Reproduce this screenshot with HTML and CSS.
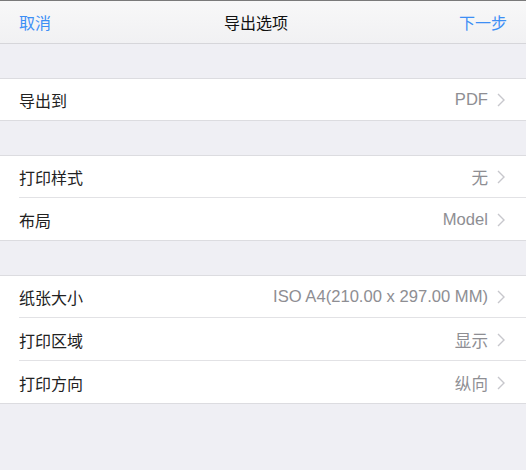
FILE: index.html
```html
<!DOCTYPE html>
<html lang="zh-CN">
<head>
<meta charset="utf-8">
<title>导出选项</title>
<link rel="stylesheet" href="styles.css">
</head>
<body>
<div class="screen">
  <header class="navbar">
    <span class="nav-btn">取消</span>
    <span class="nav-title">导出选项</span>
    <span class="nav-btn">下一步</span>
  </header>

  <section class="group">
    <div class="row"><span class="label">导出到</span><span class="value">PDF</span><svg class="chev" width="8" height="14" viewBox="0 0 8 14"><polyline points="1,1 7,7 1,13" fill="none" stroke="#c7c7cc" stroke-width="1.4"/></svg></div>
  </section>

  <section class="group">
    <div class="row"><span class="label">打印样式</span><span class="value">无</span><svg class="chev" width="8" height="14" viewBox="0 0 8 14"><polyline points="1,1 7,7 1,13" fill="none" stroke="#c7c7cc" stroke-width="1.4"/></svg></div>
    <div class="row"><span class="label">布局</span><span class="value">Model</span><svg class="chev" width="8" height="14" viewBox="0 0 8 14"><polyline points="1,1 7,7 1,13" fill="none" stroke="#c7c7cc" stroke-width="1.4"/></svg></div>
  </section>

  <section class="group">
    <div class="row"><span class="label">纸张大小</span><span class="value">ISO A4(210.00 x 297.00 MM)</span><svg class="chev" width="8" height="14" viewBox="0 0 8 14"><polyline points="1,1 7,7 1,13" fill="none" stroke="#c7c7cc" stroke-width="1.4"/></svg></div>
    <div class="row"><span class="label">打印区域</span><span class="value">显示</span><svg class="chev" width="8" height="14" viewBox="0 0 8 14"><polyline points="1,1 7,7 1,13" fill="none" stroke="#c7c7cc" stroke-width="1.4"/></svg></div>
    <div class="row"><span class="label">打印方向</span><span class="value">纵向</span><svg class="chev" width="8" height="14" viewBox="0 0 8 14"><polyline points="1,1 7,7 1,13" fill="none" stroke="#c7c7cc" stroke-width="1.4"/></svg></div>
  </section>
</div>
</body>
</html>
```

FILE: styles.css
```css
* { box-sizing: border-box; }
html, body { margin: 0; padding: 0; }
body {
  background: #efeff4;
  font-family: "Liberation Sans", "Noto Sans CJK SC", sans-serif;
  font-size: 16px;
  color: #222;
  width: 526px;
  height: 470px;
  overflow: hidden;
}
.screen {
  display: flex;
  flex-direction: column;
  gap: 34px;
}
.navbar {
  height: 44px;
  border-top: 1px solid #7a7a7a;
  border-bottom: 1px solid #d6d6da;
  background: linear-gradient(#f8f8f8, #f1f1f3);
  display: flex;
  align-items: center;
  justify-content: space-between;
  padding: 0 19px 1px 19px;
}
.nav-btn { color: #3d8ff5; font-size: 16px; }
.nav-title { color: #111; font-size: 16px; position: relative; left: 1px; }
.group {
  background: #fff;
  border-top: 1px solid #dcdce0;
  border-bottom: 1px solid #dcdce0;
  padding-left: 19px;
}
.row {
  height: 41px;
  display: flex;
  align-items: center;
  padding-right: 21px;
}
.row + .row { border-top: 1px solid #e2e2e5; height: 43px; padding-top: 1px; }
.label { flex: 1; color: #222; }
.value { color: #8e8e93; font-size: 16.6px; }
.chev {
  display: block;
  margin-left: 9px;
}
```
